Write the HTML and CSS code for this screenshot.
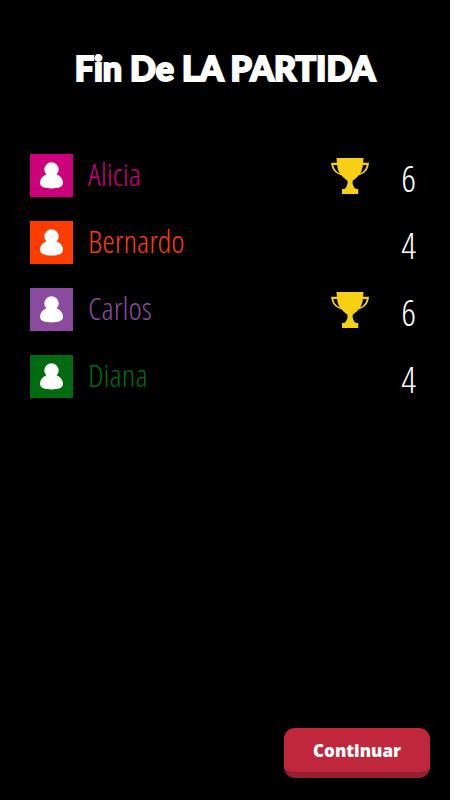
FILE: index.html
```html
<!DOCTYPE html>
<html lang="es">
<head>
    <meta charset="UTF-8">
    <meta name="viewport" content="width=device-width, initial-scale=1.0">
    <title>Fin de la partida</title>
    <link rel="stylesheet" href="styles.css">
</head>
<body>
    <!-- Shared icons -->
    <svg class="icon-defs" aria-hidden="true">
        <symbol id="person" viewBox="0 0 43 43">
            <circle cx="21.500" cy="15.500" r="7.200"/>
            <path d="M16 20.500h11c3.800 1.500 6 5.100 6 8.600 0 3.800-4.800 5.400-11.500 5.400S10 32.900 10 29.100c0-3.500 2.200-7.100 6-8.600z"/>
        </symbol>
        <symbol id="trophy" viewBox="0 0 38 38">
            <path fill-rule="evenodd" d="M5.500 1h27l-.4 4.800H38c-.3 6.200-3.700 10.600-10.500 12.700-1.900 2.300-4.200 4.200-5.800 5.300-.5 3.600.8 6.600 3.200 8.300h2.300V37H11v-4.900h2.300c2.400-1.700 3.700-4.700 3.200-8.300-1.600-1.100-3.900-3-5.800-5.300C3.900 16.400.400 12 .1 5.800h5.800zM2.300 7.900c.6 3.900 3 6.900 6.500 8.400-1.500-2.500-2.400-5.200-2.700-8.400zM31.900 7.900c-.3 3.200-1.200 5.900-2.700 8.400 3.500-1.500 5.900-4.500 6.500-8.400z"/>
        </symbol>
    </svg>

    <main class="game-over">
        <h1 class="title">Fin De LA PARTIDA</h1>

        <ul class="players">
            <li class="player pink">
                <svg class="avatar" aria-hidden="true"><use href="#person"/></svg>
                <span class="name">Alicia</span>
                <svg class="trophy" role="img" aria-label="Ganador"><use href="#trophy"/></svg>
                <span class="score">6</span>
            </li>
            <li class="player orange">
                <svg class="avatar" aria-hidden="true"><use href="#person"/></svg>
                <span class="name">Bernardo</span>
                <span class="score">4</span>
            </li>
            <li class="player purple">
                <svg class="avatar" aria-hidden="true"><use href="#person"/></svg>
                <span class="name">Carlos</span>
                <svg class="trophy" role="img" aria-label="Ganador"><use href="#trophy"/></svg>
                <span class="score">6</span>
            </li>
            <li class="player green">
                <svg class="avatar" aria-hidden="true"><use href="#person"/></svg>
                <span class="name">Diana</span>
                <span class="score">4</span>
            </li>
        </ul>

        <button class="continue" type="button">Continuar</button>
    </main>
</body>
</html>
```
FILE: styles.css
```css
* {
    box-sizing: border-box;
}

body {
    margin: 0;
    background-color: #000;
    color: #fff;
    font-family: "Open Sans", sans-serif;
}

.icon-defs {
    display: none;
}

.game-over {
    min-height: 100vh;
    display: flex;
    flex-direction: column;
    padding: 44px 20px 22px;
}

.title {
    margin: 0;
    font-family: "Lato Black", Lato, sans-serif;
    font-size: 34px;
    font-weight: 900;
    line-height: 48px;
    text-align: center;
    -webkit-text-stroke: 2px #fff; /* chunkier letters */
}

.players {
    list-style: none;
    margin: 62px 0 0;
    padding: 0 10px;
    display: flex;
    flex-direction: column;
    gap: 24px;
}

.player {
    display: flex;
    align-items: center;
    height: 43px;
    font-family: "Open Sans Condensed Light", "Open Sans Condensed", "Liberation Sans Narrow", sans-serif;
    font-weight: 300;
}

.avatar {
    width: 43px;
    height: 43px;
    background-color: var(--color);
    fill: #fff;
}

.name {
    flex: 1;
    padding: 0 0 3px 15px;
    color: var(--color);
    font-size: 32px;
    line-height: 40px;
}

.trophy {
    width: 38px;
    height: 38px;
    fill: #f7cf15;
}

.score {
    width: 51px;
    padding: 3px 4px 0 0;
    font-size: 37px;
    line-height: 43px;
    text-align: right;
}

/* Player colors */
.pink {
    --color: #cc007a;
}

.orange {
    --color: #ff3c00;
}

.purple {
    --color: #8a4b9f;
}

.green {
    --color: #006b10;
}

.continue {
    align-self: flex-end;
    margin-top: auto;
    padding: 11px 29px 10px;
    border: 0;
    border-bottom: 6px solid #931f30;
    border-radius: 11px;
    background-color: #c0273d;
    color: #fff;
    font-family: "Open Sans", sans-serif;
    font-size: 17px;
    font-weight: 800;
    line-height: 23px;
    cursor: pointer;
}
```
